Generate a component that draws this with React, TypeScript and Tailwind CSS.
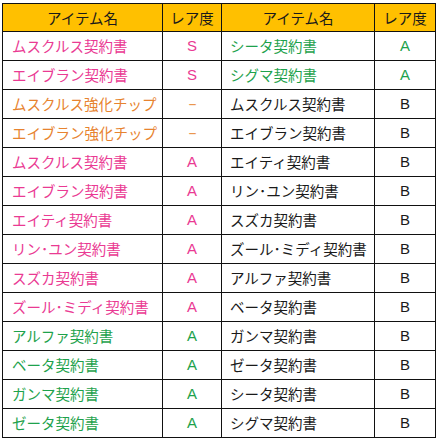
const PINK = "text-[#ea3a93]";
const ORANGE = "text-[#e7832f]";
const GREEN = "text-[#1ea24c]";
const BLACK = "text-[#1a1a1a]";

type Cell = { name: string; rank: string; color: string };

const left: Cell[] = [
  { name: "ムスクルス契約書", rank: "S", color: PINK },
  { name: "エイブラン契約書", rank: "S", color: PINK },
  { name: "ムスクルス強化チップ", rank: "－", color: ORANGE },
  { name: "エイブラン強化チップ", rank: "－", color: ORANGE },
  { name: "ムスクルス契約書", rank: "A", color: PINK },
  { name: "エイブラン契約書", rank: "A", color: PINK },
  { name: "エイティ契約書", rank: "A", color: PINK },
  { name: "リン･ユン契約書", rank: "A", color: PINK },
  { name: "スズカ契約書", rank: "A", color: PINK },
  { name: "ズール･ミディ契約書", rank: "A", color: PINK },
  { name: "アルファ契約書", rank: "A", color: GREEN },
  { name: "ベータ契約書", rank: "A", color: GREEN },
  { name: "ガンマ契約書", rank: "A", color: GREEN },
  { name: "ゼータ契約書", rank: "A", color: GREEN },
];

const right: Cell[] = [
  { name: "シータ契約書", rank: "A", color: GREEN },
  { name: "シグマ契約書", rank: "A", color: GREEN },
  { name: "ムスクルス契約書", rank: "B", color: BLACK },
  { name: "エイブラン契約書", rank: "B", color: BLACK },
  { name: "エイティ契約書", rank: "B", color: BLACK },
  { name: "リン･ユン契約書", rank: "B", color: BLACK },
  { name: "スズカ契約書", rank: "B", color: BLACK },
  { name: "ズール･ミディ契約書", rank: "B", color: BLACK },
  { name: "アルファ契約書", rank: "B", color: BLACK },
  { name: "ベータ契約書", rank: "B", color: BLACK },
  { name: "ガンマ契約書", rank: "B", color: BLACK },
  { name: "ゼータ契約書", rank: "B", color: BLACK },
  { name: "シータ契約書", rank: "B", color: BLACK },
  { name: "シグマ契約書", rank: "B", color: BLACK },
];

export default function App() {
  return (
    <div className="w-[439px] h-[440px] bg-white pt-[3px] pl-[2px] font-['Noto_Sans_CJK_JP',sans-serif]">
      <table className="table-fixed border-collapse w-[434px] text-[14.5px]">
        <colgroup>
          <col className="w-[160px]" />
          <col className="w-[59px]" />
          <col className="w-[153px]" />
          <col className="w-[61px]" />
        </colgroup>
        <thead>
          <tr className="h-[28px] bg-[#ffc000] text-[#1a1a1a]">
            <th className="border border-[#111] font-normal text-center p-0">アイテム名</th>
            <th className="border border-[#111] font-normal text-center p-0">レア度</th>
            <th className="border border-[#111] font-normal text-center p-0">アイテム名</th>
            <th className="border border-[#111] font-normal text-center p-0">レア度</th>
          </tr>
        </thead>
        <tbody>
          {left.map((l, i) => {
            const r = right[i];
            return (
              <tr key={i} className="h-[29px]">
                <td className={`border border-[#111] pl-[9px] p-0 whitespace-nowrap ${l.color}`}>{l.name}</td>
                <td className={`border border-[#111] text-center p-0 text-[15px] font-['Liberation_Sans',sans-serif] ${l.color}`}>{l.rank}</td>
                <td className={`border border-[#111] pl-[8px] p-0 whitespace-nowrap ${r.color}`}>{r.name}</td>
                <td className={`border border-[#111] text-center p-0 text-[15px] font-['Liberation_Sans',sans-serif] ${r.color}`}>{r.rank}</td>
              </tr>
            );
          })}
        </tbody>
      </table>
    </div>
  );
}
